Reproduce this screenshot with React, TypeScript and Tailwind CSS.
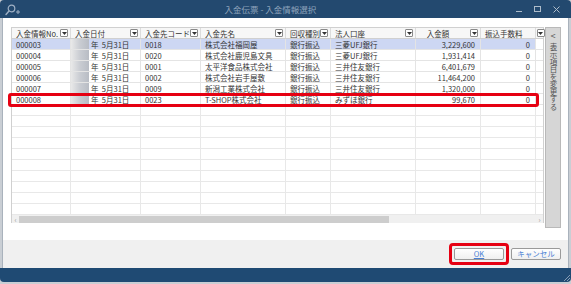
import React from "react";

type Col = { label: string; w: string; right?: boolean };

const cols: Col[] = [
  { label: "入金情報No.", w: "w-[59px]" },
  { label: "入金日付", w: "w-[70px]" },
  { label: "入金先コード", w: "w-[60px]" },
  { label: "入金先名", w: "w-[85px]" },
  { label: "回収種別", w: "w-[45px]" },
  { label: "法人口座", w: "w-[85px]" },
  { label: "入金額", w: "w-[65px]", right: true },
  { label: "振込手数料", w: "w-[55px]", right: true },
];

const rows = [
  ["000003", "年  5月31日", "0018", "株式会社福岡屋", "銀行振込", "三菱UFJ銀行", "3,229,600", "0"],
  ["000004", "年  5月31日", "0020", "株式会社鹿児島文具", "銀行振込", "三菱UFJ銀行", "1,931,414", "0"],
  ["000005", "年  5月31日", "0001", "太平洋食品株式会社", "銀行振込", "三井住友銀行", "6,401,679", "0"],
  ["000006", "年  5月31日", "0002", "株式会社岩手屋敷", "銀行振込", "三井住友銀行", "11,464,200", "0"],
  ["000007", "年  5月31日", "0009", "新潟工業株式会社", "銀行振込", "三井住友銀行", "1,320,000", "0"],
  ["000008", "年  5月31日", "0023", "T-SHOP株式会社", "銀行振込", "みずほ銀行", "99,670", "0"],
];

const emptyRows = Array.from({ length: 10 });

function DropBtn() {
  return (
    <span className="ml-auto mr-[2px] flex h-[8px] w-[8px] shrink-0 items-center justify-center rounded-[1px] border border-[#8a8a8a] bg-white">
      <svg width="5" height="3" viewBox="0 0 5 3">
        <path d="M0 0 L5 0 L2.5 3 Z" fill="#333" />
      </svg>
    </span>
  );
}

export default function App() {
  return (
    <div className="flex h-[284px] w-[571px] flex-col overflow-hidden whitespace-nowrap bg-[#c9ced4] font-['Noto_Sans_CJK_JP','Noto_Sans',sans-serif] text-[7.5px] leading-[11px] text-[#333]">
      {/* Title bar */}
      <div className="relative flex h-[18px] shrink-0 items-center rounded-t-[4px] bg-[#23496f] px-[5px]">
        <svg width="16" height="12" viewBox="0 0 16 12" className="mt-[1px]">
          <circle cx="6.5" cy="4.5" r="3.3" fill="none" stroke="#9fb0c4" strokeWidth="1.2" />
          <path d="M4 7 L1 10.5" stroke="#9fb0c4" strokeWidth="1.4" strokeLinecap="round" />
          <path d="M11 8 H15 M13 6 V10" stroke="#9fb0c4" strokeWidth="1" />
        </svg>
        <div className="flex-1 pl-[4px] text-center text-[8.5px] text-[#8ea3bb]">入金伝票 - 入金情報選択</div>
        <div className="flex items-center gap-[12px] pr-[6px]">
          <span className="mt-[5px] h-[1px] w-[6px] bg-[#aebcca]" />
          <span className="h-[6px] w-[7px] border border-[#aebcca]" />
          <svg width="7" height="7" viewBox="0 0 7 7">
            <path d="M0.5 0.5 L6.5 6.5 M6.5 0.5 L0.5 6.5" stroke="#aebcca" strokeWidth="1" />
          </svg>
        </div>
      </div>

      {/* Window body */}
      <div className="mx-[2px] flex flex-1 flex-col border-x border-[#a9b2bc] bg-white">
        <div className="flex flex-1 gap-[1px] pl-[8px] pt-[9px]">
          {/* Grid */}
          <div className="relative flex h-[196px] w-[533px] flex-col border border-b-0 border-[#d0d0d0]">
            {/* header */}
            <div className="flex h-[11px] border-b border-[#d0d0d0] bg-[#f7f7f7]">
              {cols.map((c) => (
                <div key={c.label} className={`${c.w} flex shrink-0 items-center border-r border-[#dcdcdc] pl-[4px]`}>
                  <span className={c.right ? "ml-auto mr-[14px]" : ""}>{c.label}</span>
                  <DropBtn />
                </div>
              ))}
              <div className="flex-1" />
            </div>

            {/* data rows */}
            {rows.map((r, i) => (
              <div
                key={r[0]}
                className={`flex h-[11px] border-b border-[#e4e4e4] ${i === 0 ? "bg-[#cdd7f3]" : "bg-white"}`}
              >
                {cols.map((c, j) => (
                  <div
                    key={c.label}
                    className={`${c.w} flex shrink-0 items-center overflow-hidden whitespace-pre border-r border-[#e4e4e4] ${
                      c.right ? "justify-end pr-[5px]" : j === 1 ? "" : "pl-[4px]"
                    }`}
                  >
                    {j === 1 && (
                      <span className="mr-[2px] h-[11px] w-[18px] shrink-0 bg-gradient-to-r from-[#e9e9e9] via-[#c9ccd2] to-[#b8bcc4]" />
                    )}
                    {r[j]}
                  </div>
                ))}
                <div className="flex-1 bg-white" />
              </div>
            ))}

            {emptyRows.map((_, i) => (
              <div key={i} className="flex h-[11px] border-b border-[#e8e8e8]">
                {cols.map((c) => (
                  <div key={c.label} className={`${c.w} shrink-0 border-r border-[#e8e8e8]`} />
                ))}
              </div>
            ))}

            {/* horizontal scrollbar */}
            <div className="flex h-[8px] items-center bg-[#f0f0f0]">
              <span className="w-[7px] text-center text-[7px] leading-[8px] text-[#999]">‹</span>
              <div className="h-[7px] w-[370px] bg-[#cdcdcd]" />
              <div className="flex-1" />
              <span className="w-[7px] text-center text-[7px] leading-[8px] text-[#999]">›</span>
            </div>

            {/* selected row highlight */}
            <div className="absolute left-[-4px] top-[65px] h-[14px] w-[531px] rounded-[3px] border-[3px] border-[#e60012]" />
          </div>

          {/* Side panel */}
          <div className="flex h-[201px] w-[16px] flex-col items-center border border-[#b9b9b9] bg-[#d6d6d6] pt-[2px] text-[#555]">
            <span className="text-[9px] leading-[11px]">&lt;</span>
            <span className="mt-[2px] text-[7.5px] leading-[14px] [writing-mode:vertical-rl]">表示項目を変更する</span>
          </div>
        </div>

        {/* Footer */}
        <div className="flex h-[28px] shrink-0 items-center justify-end gap-[7px] bg-[#f0f0f0] pr-[7px]">
          <div className="relative">
            <button className="flex h-[12px] w-[50px] items-center justify-center rounded-[2px] border border-[#9a9a9a] bg-gradient-to-b from-white to-[#f0f0f0] text-[7.5px] leading-[10px] text-[#4a7fd4] underline">
              OK
            </button>
            <div className="absolute -inset-[5px] rounded-[4px] border-[3px] border-[#e60012]" />
          </div>
          <button className="flex h-[12px] w-[50px] items-center justify-center rounded-[2px] border border-[#9a9a9a] bg-gradient-to-b from-white to-[#f0f0f0] text-[7.5px] leading-[10px] text-[#4a7fd4]">
            キャンセル
          </button>
        </div>
      </div>

      {/* Bottom bar */}
      <div className="relative h-[14px] shrink-0 rounded-b-[4px] bg-[#1f4a73]">
        <svg width="6" height="6" viewBox="0 0 6 6" className="absolute bottom-[1px] right-[1px]">
          <path d="M6 0 L0 6 M6 3 L3 6" stroke="#9fb0c4" strokeWidth="0.8" />
        </svg>
      </div>
      <div className="h-[2px] shrink-0" />
    </div>
  );
}
